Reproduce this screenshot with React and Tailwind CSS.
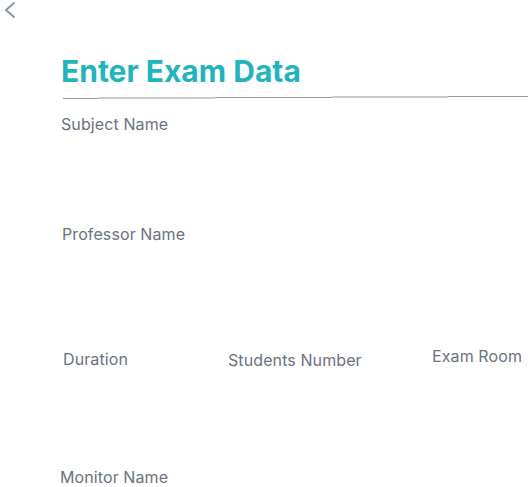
function Label({ children, className = "" }) {
  return <div className={`text-[16px] leading-5 tracking-[0.1px] text-[#6b7280] ${className}`}>{children}</div>;
}

export default function App() {
  return (
    <div className="relative w-[528px] h-[487px] overflow-hidden bg-white font-['Inter',sans-serif]">
      <button className="absolute left-[4px] top-[1px]">
        <svg width="12" height="18" viewBox="0 0 12 18" fill="none">
          <polyline points="10,2 2,9 10,16" stroke="#8b94a6" strokeWidth="2" strokeLinecap="round" strokeLinejoin="round" />
        </svg>
      </button>

      <div className="pt-[53px]">
        <h1 className="pl-[61px] text-[30px] leading-9 font-bold text-[#22b4bc]">
          Enter Exam Data
        </h1>

        <div className="flex h-[4px] mt-[6px] pl-[63px]">
          <div className="w-[35px] h-px mt-[3px] bg-[#999]" />
          <div className="w-[117px] h-[2px] mt-[2px] bg-[#ccc]" />
          <div className="w-[117px] h-px mt-[2px] bg-[#999]" />
          <div className="w-[116px] h-[2px] mt-[1px] bg-[#ccc]" />
          <div className="w-[80px] h-px mt-[1px] bg-[#999]" />
        </div>

        <Label className="pl-[61px] mt-[15px]">Subject Name</Label>
        <Label className="pl-[62px] mt-[90px]">Professor Name</Label>

        <div className="flex items-start mt-[102px]">
          <Label className="pl-[63px] w-[228px] mt-[3px]">Duration</Label>
          <Label className="w-[204px] mt-[4px]">Students Number</Label>
          <Label>Exam Room</Label>
        </div>

        <Label className="pl-[60px] mt-[97px] leading-4">Monitor Name</Label>
      </div>
    </div>
  );
}
